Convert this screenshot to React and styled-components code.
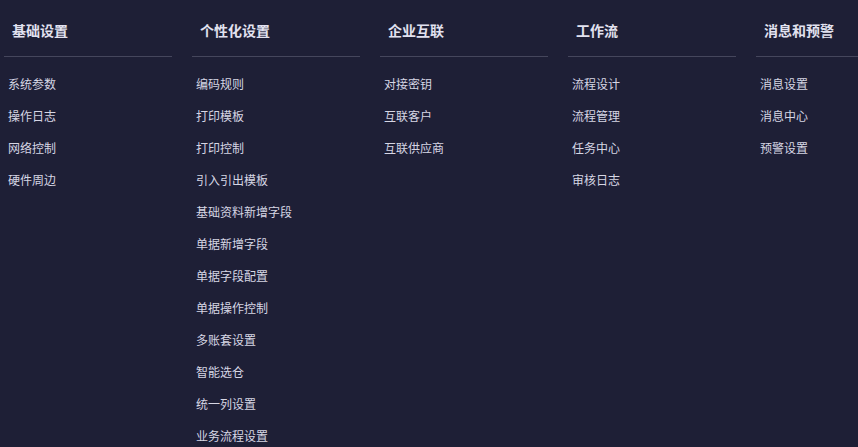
import React from 'react'
import styled, { createGlobalStyle } from 'styled-components'

const GROUPS = [
  { title: '基础设置', items: ['系统参数', '操作日志', '网络控制', '硬件周边'] },
  {
    title: '个性化设置',
    items: [
      '编码规则', '打印模板', '打印控制', '引入引出模板', '基础资料新增字段', '单据新增字段',
      '单据字段配置', '单据操作控制', '多账套设置', '智能选仓', '统一列设置', '业务流程设置'
    ]
  },
  { title: '企业互联', items: ['对接密钥', '互联客户', '互联供应商'] },
  { title: '工作流', items: ['流程设计', '流程管理', '任务中心', '审核日志'] },
  { title: '消息和预警', items: ['消息设置', '消息中心', '预警设置'] }
]

const GlobalStyle = createGlobalStyle`
  html, body {
    margin: 0;
    background: #1e1f36;
    overflow: hidden;
  }
  body {
    font-family: "Noto Sans CJK SC", "Noto Sans", sans-serif;
  }
`

const App = () => (
  <>
    <GlobalStyle />
    <Page>
      {GROUPS.map((group) => (
        <Column key={group.title}>
          <Heading>{group.title}</Heading>
          <ItemList>
            {group.items.map((item) => <Item key={item}>{item}</Item>)}
          </ItemList>
        </Column>
      ))}
    </Page>
  </>
)

const Page = styled.div`
  display: grid;
  grid-template-columns: repeat(5, 168px);
  column-gap: 20px;
  padding-left: 4px;
  width: 100%;
  height: 447px;
  box-sizing: border-box;
  overflow: hidden;
`

const Column = styled.div`
  display: flex;
  flex-direction: column;
`

const Heading = styled.div`
  height: 57px;
  padding: 19px 8px 0;
  box-sizing: border-box;
  line-height: 22px;
  font-size: 14px;
  font-weight: bold;
  color: #e2e2f0;
  border-bottom: 1px solid #45465c;
`

const ItemList = styled.div`
  display: flex;
  flex-direction: column;
  padding-top: 11px;
`

const Item = styled.div`
  height: 32px;
  line-height: 32px;
  padding-left: 4px;
  font-size: 12px;
  color: #d6d6e4;
  cursor: pointer;
`

export default App
